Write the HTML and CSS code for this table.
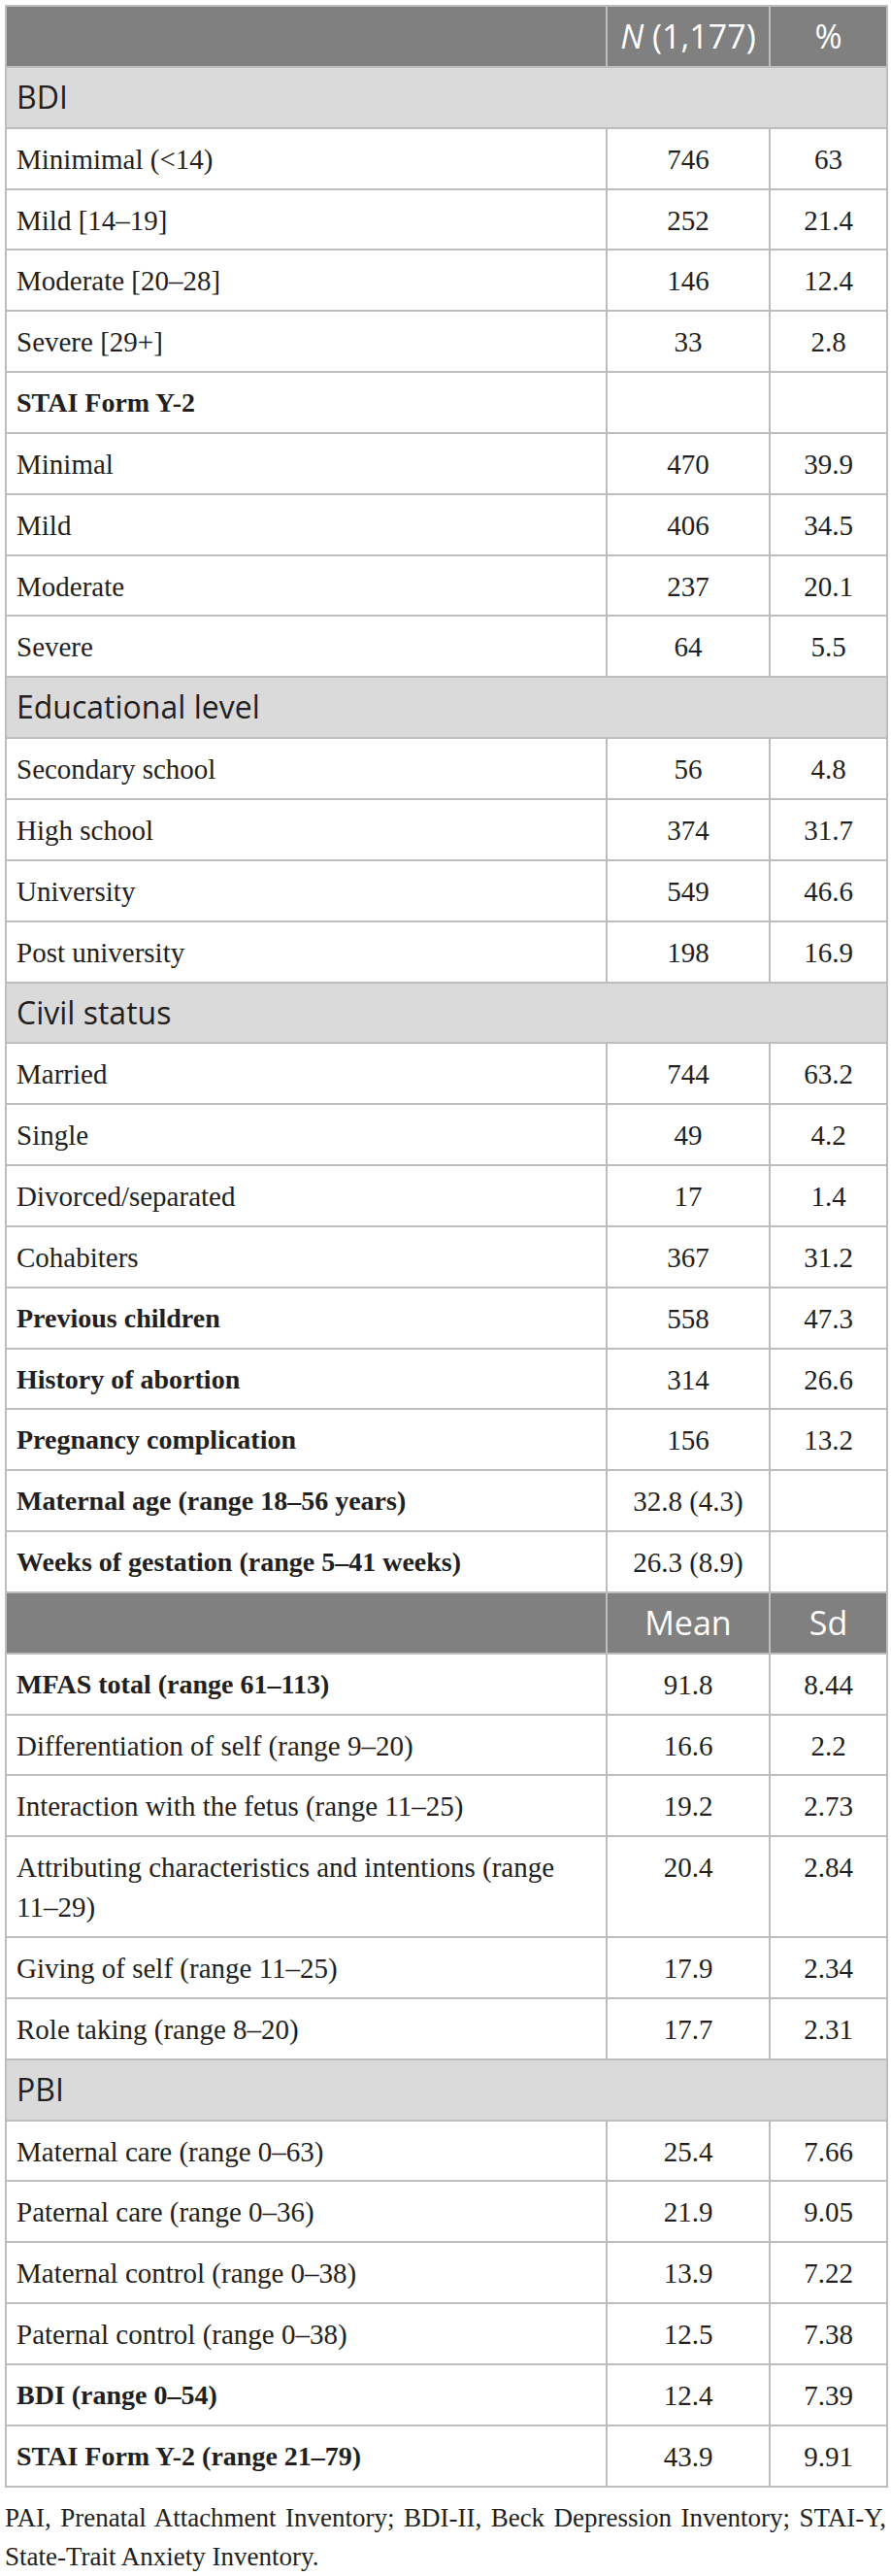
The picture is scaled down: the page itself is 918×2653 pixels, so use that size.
FILE: index.html
```html
<!DOCTYPE html>
<html lang="en">
<head>
<meta charset="utf-8">
<title>Sample characteristics</title>
<link rel="stylesheet" href="styles.css">
</head>
<body>
<div class="wrap">
<table class="data">
<colgroup><col class="c1"><col class="c2"><col class="c3"></colgroup>
<tr class="head"><th></th><th><i>N</i> (1,177)</th><th>%</th></tr>
<tr class="section"><td colspan="3">BDI</td></tr>
<tr><td>Minimimal (&lt;14)</td><td class="num">746</td><td class="num">63</td></tr>
<tr><td>Mild [14–19]</td><td class="num">252</td><td class="num">21.4</td></tr>
<tr><td>Moderate [20–28]</td><td class="num">146</td><td class="num">12.4</td></tr>
<tr><td>Severe [29+]</td><td class="num">33</td><td class="num">2.8</td></tr>
<tr><td class="b">STAI Form Y-2</td><td class="num"></td><td class="num"></td></tr>
<tr><td>Minimal</td><td class="num">470</td><td class="num">39.9</td></tr>
<tr><td>Mild</td><td class="num">406</td><td class="num">34.5</td></tr>
<tr><td>Moderate</td><td class="num">237</td><td class="num">20.1</td></tr>
<tr><td>Severe</td><td class="num">64</td><td class="num">5.5</td></tr>
<tr class="section"><td colspan="3">Educational level</td></tr>
<tr><td>Secondary school</td><td class="num">56</td><td class="num">4.8</td></tr>
<tr><td>High school</td><td class="num">374</td><td class="num">31.7</td></tr>
<tr><td>University</td><td class="num">549</td><td class="num">46.6</td></tr>
<tr><td>Post university</td><td class="num">198</td><td class="num">16.9</td></tr>
<tr class="section"><td colspan="3">Civil status</td></tr>
<tr><td>Married</td><td class="num">744</td><td class="num">63.2</td></tr>
<tr><td>Single</td><td class="num">49</td><td class="num">4.2</td></tr>
<tr><td>Divorced/separated</td><td class="num">17</td><td class="num">1.4</td></tr>
<tr><td>Cohabiters</td><td class="num">367</td><td class="num">31.2</td></tr>
<tr><td class="b">Previous children</td><td class="num">558</td><td class="num">47.3</td></tr>
<tr><td class="b">History of abortion</td><td class="num">314</td><td class="num">26.6</td></tr>
<tr><td class="b">Pregnancy complication</td><td class="num">156</td><td class="num">13.2</td></tr>
<tr><td class="b">Maternal age (range 18–56 years)</td><td class="num">32.8 (4.3)</td><td class="num"></td></tr>
<tr><td class="b">Weeks of gestation (range 5–41 weeks)</td><td class="num">26.3 (8.9)</td><td class="num"></td></tr>
<tr class="head"><th></th><th>Mean</th><th>Sd</th></tr>
<tr><td class="b">MFAS total (range 61–113)</td><td class="num">91.8</td><td class="num">8.44</td></tr>
<tr><td>Differentiation of self (range 9–20)</td><td class="num">16.6</td><td class="num">2.2</td></tr>
<tr><td>Interaction with the fetus (range 11–25)</td><td class="num">19.2</td><td class="num">2.73</td></tr>
<tr><td>Attributing characteristics and intentions (range 11–29)</td><td class="num">20.4</td><td class="num">2.84</td></tr>
<tr><td>Giving of self (range 11–25)</td><td class="num">17.9</td><td class="num">2.34</td></tr>
<tr><td>Role taking (range 8–20)</td><td class="num">17.7</td><td class="num">2.31</td></tr>
<tr class="section"><td colspan="3">PBI</td></tr>
<tr><td>Maternal care (range 0–63)</td><td class="num">25.4</td><td class="num">7.66</td></tr>
<tr><td>Paternal care (range 0–36)</td><td class="num">21.9</td><td class="num">9.05</td></tr>
<tr><td>Maternal control (range 0–38)</td><td class="num">13.9</td><td class="num">7.22</td></tr>
<tr><td>Paternal control (range 0–38)</td><td class="num">12.5</td><td class="num">7.38</td></tr>
<tr><td class="b">BDI (range 0–54)</td><td class="num">12.4</td><td class="num">7.39</td></tr>
<tr><td class="b">STAI Form Y-2 (range 21–79)</td><td class="num">43.9</td><td class="num">9.91</td></tr>
</table>
<p class="note">PAI, Prenatal Attachment Inventory; BDI-II, Beck Depression Inventory; STAI-Y, State-Trait Anxiety Inventory.</p>
</div>
</body>
</html>
```

FILE: styles.css
```css
html, body {
  margin: 0;
  padding: 0;
  background: #ffffff;
}

.wrap {
  width: 908px;
  padding: 5px 5px 0 5px;
}

.data {
  width: 908px;
  border-collapse: collapse;
  table-layout: fixed;
}

.c1 { width: 619px; }
.c2 { width: 168px; }
.c3 { width: 121px; }

.data td,
.data th {
  border: 2px solid #bdbdbd;
  padding: 11px 10px 9px 10px;
  line-height: 40.85px;
  vertical-align: top;
  text-align: left;
  font-family: "Liberation Serif", "Times New Roman", serif;
  font-size: 29px;
  color: #231f20;
}

.data .num {
  text-align: center;
}

.data .b {
  font-weight: bold;
  font-size: 28px;
}

.head th {
  background: #808080;
  color: #ffffff;
  font-family: "Open Sans", "DejaVu Sans", sans-serif;
  font-size: 34px;
  font-weight: normal;
  text-align: center;
  padding: 10px 10px 10px 10px;
}

.section td {
  background: #dadada;
  font-family: "Open Sans", "DejaVu Sans", sans-serif;
  font-size: 32px;
  padding: 10px 10px 10px 10px;
}

.note {
  margin: 11px 0 0 0;
  font-family: "Liberation Serif", "Times New Roman", serif;
  font-size: 27px;
  line-height: 40px;
  text-align: justify;
  color: #231f20;
}
```
